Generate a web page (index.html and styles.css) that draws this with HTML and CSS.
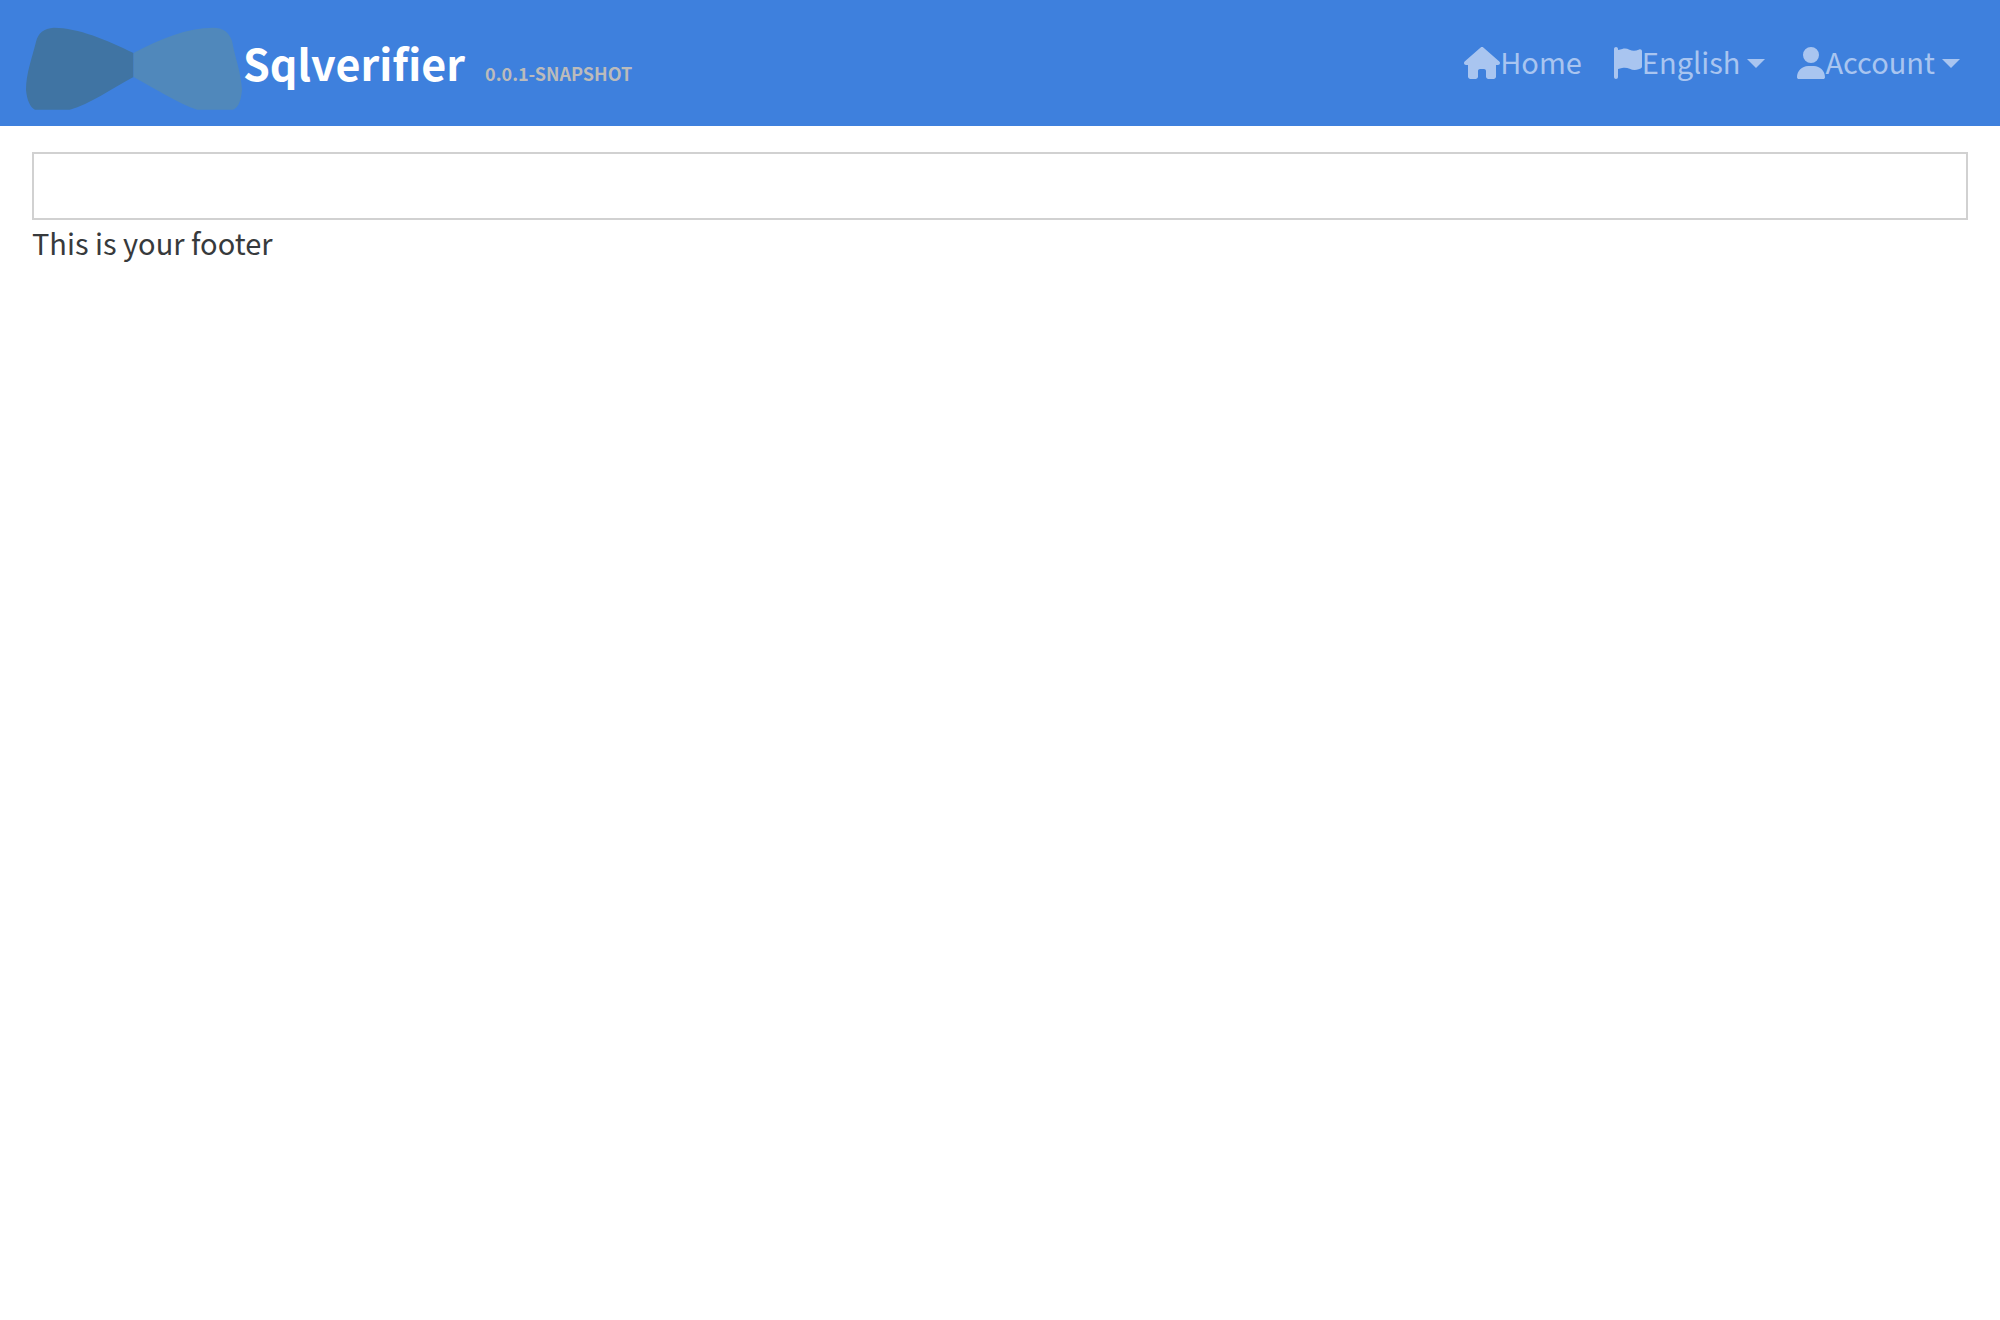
FILE: index.html
```html
<!DOCTYPE html>
<html lang="en">
<head>
<meta charset="utf-8">
<meta name="viewport" content="width=device-width, initial-scale=1">
<title>Sqlverifier</title>
<link rel="stylesheet" href="styles.css">
</head>
<body>
<header>
  <nav class="navbar">
    <a class="brand" href="#">
      <svg class="brand-logo" viewBox="0 0 218 84" aria-hidden="true">
        <path fill="#4074a3" d="M108 27C82 14 52 1.500 28 1.500C18 2 12 7 10 16C6 32 0 48 0 64C1 74 4 81 9 84H44C64 78 86 63 108 51Z"/>
        <path fill="#5088bb" d="M108 27C134 13 162 1.500 188 1.500C198 1.500 204 6 207 15C210 32 216 46 217 64C216 74 214 81 208 84H172C152 77 130 63 108 51Z"/>
      </svg>
      <span class="brand-text">
        <span class="brand-title">Sqlverifier</span>
        <span class="brand-version">0.0.1-SNAPSHOT</span>
      </span>
    </a>
    <ul class="nav">
      <li>
        <a class="nav-link" href="#">
          <svg class="icon icon-wide" viewBox="0 0 576 512" aria-hidden="true"><path d="M575.8 255.5c0 18-15 32.1-32 32.1h-32l.7 160.2c0 2.7-.2 5.4-.5 8.1V472c0 22.1-17.9 40-40 40H456c-1.1 0-2.2 0-3.3-.1c-1.4 .1-2.8 .1-4.2 .1H416 392c-22.1 0-40-17.9-40-40V448 384c0-17.7-14.3-32-32-32H256c-17.7 0-32 14.3-32 32v64 24c0 22.1-17.9 40-40 40H160 128.1c-1.5 0-3-.1-4.5-.2c-1.2 .1-2.4 .2-3.6 .2H104c-22.1 0-40-17.9-40-40V360c0-.9 0-1.9 .1-2.8V287.6H32c-18 0-32-14-32-32.1c0-9 3-17 10-24L266.4 8c7-7 15-8 22-8s15 2 21 7L564.8 231.5c8 7 12 15 11 24z"/></svg>
          <span class="nav-label">Home</span>
        </a>
      </li>
      <li>
        <button class="nav-link" type="button" aria-haspopup="true">
          <svg class="icon" viewBox="0 0 448 512" aria-hidden="true"><path d="M64 32C64 14.3 49.7 0 32 0S0 14.3 0 32V64 368 480c0 17.7 14.3 32 32 32s32-14.3 32-32V352l64.3-16.1c41.1-10.3 84.6-5.5 122.5 13.4c44.2 22.1 95.5 24.8 141.7 7.4l34.7-13c12.5-4.7 20.8-16.6 20.8-30V66.1c0-23-24.2-38-44.8-27.7l-9.6 4.8c-46.3 23.2-100.8 23.2-147.1 0c-35.1-17.6-75.4-22-113.5-12.5L64 48V32z"/></svg>
          <span class="nav-label">English</span>
          <span class="caret"></span>
        </button>
      </li>
      <li>
        <button class="nav-link" type="button" aria-haspopup="true">
          <svg class="icon" viewBox="0 0 448 512" aria-hidden="true"><path d="M224 256A128 128 0 1 0 224 0a128 128 0 1 0 0 256zm-45.7 48C79.8 304 0 383.8 0 482.3C0 498.7 13.3 512 29.7 512H418.3c16.4 0 29.7-13.3 29.7-29.7C448 383.8 368.2 304 269.7 304H178.3z"/></svg>
          <span class="nav-label">Account</span>
          <span class="caret"></span>
        </button>
      </li>
    </ul>
  </nav>
</header>
<div class="container">
  <main class="card"></main>
  <footer>
    <p class="footer-text">This is your footer</p>
  </footer>
</div>
</body>
</html>
```

FILE: styles.css
```css
* {
  box-sizing: border-box;
}

body {
  margin: 0;
  background: #fff;
  color: #373a3c;
  font-family: "Noto Sans CJK SC", "Noto Sans", sans-serif;
  font-size: 29px;
  line-height: 44px;
}

.navbar {
  display: flex;
  align-items: center;
  justify-content: space-between;
  min-height: 126px;
  padding: 0 24px;
  background: #3e80dd;
}

.brand {
  display: flex;
  align-items: center;
  color: #fff;
  font-weight: 700;
  text-decoration: none;
}

.brand-logo {
  width: 217px;
  height: 84px;
  margin: 10px 0 0 2px;
}

.brand-text {
  display: flex;
  align-items: baseline;
  gap: 20px;
  padding-top: 8px;
}

.brand-title {
  font-size: 43px;
}

.brand-version {
  color: #bbb;
  font-size: 18px;
}

.nav {
  display: flex;
  margin: 0;
  padding: 0;
  list-style: none;
}

.nav-link {
  display: flex;
  align-items: center;
  padding: 16px;
  border: 0;
  background: none;
  color: #a9c5f0;
  font: inherit;
  text-decoration: none;
  cursor: pointer;
}

.nav-label {
  padding-bottom: 4px;
}

.icon {
  width: 28px;
  height: 32px;
  fill: currentColor;
}

.icon-wide {
  width: 36px;
}

.caret {
  margin-left: 7px;
  border-top: 9px solid;
  border-right: 9px solid transparent;
  border-left: 9px solid transparent;
}

.container {
  padding: 26px 32px;
}

.card {
  min-height: 68px;
  border: 2px solid #d1d1d1;
  background: #fff;
}

.footer-text {
  margin: 0;
}
```
